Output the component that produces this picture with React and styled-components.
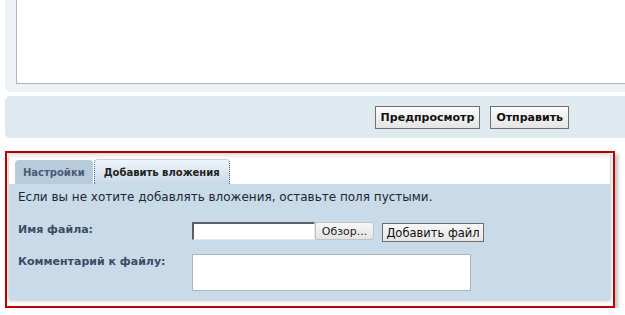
import React from 'react'
import styled, { createGlobalStyle } from 'styled-components'

const GlobalStyle = createGlobalStyle`
  html, body { margin: 0; padding: 0; background: #fff; overflow: hidden; }
  body { font-family: "DejaVu Sans", Verdana, sans-serif; }
`

const Page = styled.div`
  width: 640px;
  padding-left: 5px;
`

const EditorPanel = styled.div`
  background: #edf2f6;
  border-radius: 0 0 5px 5px;
  padding: 0 0 8px 11px;
`

const Editor = styled.textarea`
  display: block;
  box-sizing: border-box;
  width: 100%;
  height: 84px;
  margin: 0;
  border: 1px solid #b3b3b3;
  border-top: none;
  border-right: none;
  background: #fff;
  resize: none;
  outline: none;
`

const ActionBar = styled.div`
  margin-top: 4px;
  height: 42px;
  box-sizing: border-box;
  padding: 10px 76px 0 0;
  background: #dfe9f0;
  border-radius: 5px;
  display: flex;
  justify-content: flex-end;
  align-items: flex-start;
  gap: 10px;
`

const SubmitButton = styled.button`
  height: 23px;
  padding: 0 5px;
  border: 1px solid #6f6f6f;
  background: linear-gradient(#fbfbfb, #e4e4e4);
  font-family: "DejaVu Sans", Verdana, sans-serif;
  font-weight: bold;
  font-size: 11px;
  color: #111;
`

const Highlight = styled.div`
  margin-top: 13px;
  width: 610px;
  box-sizing: border-box;
  border: 2px solid #c00000;
  padding: 1px 3px 6px 2px;
  box-shadow: 3px 3px 4px rgba(0, 0, 0, 0.25);
`

const AttachBox = styled.div`
  background: #fff;
  box-shadow: 0 0 4px rgba(0, 0, 0, 0.35);
`

const Tabs = styled.div`
  display: flex;
  align-items: flex-end;
  padding: 5px 0 0 6px;
  background: linear-gradient(#e6e6e6, #fff 5px);
`

const Tab = styled.div`
  box-sizing: border-box;
  height: ${p => (p.$active ? 25 : 24)}px;
  padding: 0 ${p => (p.$active ? 9 : 7)}px;
  display: flex;
  align-items: center;
  font-size: 10px;
  font-weight: bold;
  color: ${p => (p.$active ? '#222' : '#4b5a78')};
  background: ${p => (p.$active ? 'linear-gradient(#eef5fc, #cad9e8)' : '#b8cbdb')};
  border-radius: 4px 4px 0 0;
  border-top: 1px solid ${p => (p.$active ? '#c7d2dc' : '#b8cbdb')};
  border-left: 1px ${p => (p.$active ? 'dotted #45699a' : 'solid #b8cbdb')};
  border-right: 1px ${p => (p.$active ? 'dotted #45699a' : 'solid #b8cbdb')};
  margin-left: ${p => (p.$active ? 1 : 0)}px;
`

const TabBody = styled.div`
  background: #c9dae9;
  padding: 6px 8px 9px 9px;
`

const Hint = styled.div`
  font-size: 12px;
  line-height: 15px;
  color: #1f2633;
  margin-bottom: 17px;
`

const Row = styled.div`
  display: grid;
  grid-template-columns: 174px 1fr;
  align-items: start;
  & + & { margin-top: 12px; }
`

const Label = styled.div`
  font-size: 11px;
  font-weight: bold;
  line-height: 14px;
  color: #3c4a64;
  padding-top: 1px;
`

const FileRow = styled.div`
  display: flex;
  align-items: flex-start;
`

const FileField = styled.input`
  box-sizing: border-box;
  width: 123px;
  height: 18px;
  margin: 0;
  background: #fff;
  border-style: solid;
  border-width: 2px 1px 1px 2px;
  border-color: #5b5f66 #e6e6e6 #e6e6e6 #5b5f66;
  outline: none;
`

const Browse = styled.button`
  box-sizing: border-box;
  height: 18px;
  width: 59px;
  margin: 0 8px 0 0;
  padding: 0;
  border: 1px solid #c2c2c2;
  border-radius: 3px;
  background: linear-gradient(#f7f7f7, #e3e3e3);
  font-family: "DejaVu Sans", Verdana, sans-serif;
  font-size: 11px;
  color: #222;
`

const AddFile = styled.button`
  box-sizing: border-box;
  height: 19px;
  width: 102px;
  padding: 0;
  margin: 1px 0 0;
  border: 1px solid #6d6d6d;
  background: linear-gradient(#f7f7f7, #e6e6e6);
  font-family: "DejaVu Sans", Verdana, sans-serif;
  font-size: 11.5px;
  color: #111;
`

const Comment = styled.textarea`
  box-sizing: border-box;
  width: 279px;
  height: 37px;
  margin: 0;
  border: 1px solid #adb6bf;
  background: #fff;
  resize: none;
  outline: none;
`

export default function App() {
  return (
    <>
      <GlobalStyle />
      <Page>
        <EditorPanel>
          <Editor readOnly />
        </EditorPanel>
        <ActionBar>
          <SubmitButton>Предпросмотр</SubmitButton>
          <SubmitButton>Отправить</SubmitButton>
        </ActionBar>
        <Highlight>
          <AttachBox>
            <Tabs>
              <Tab>Настройки</Tab>
              <Tab $active>Добавить вложения</Tab>
            </Tabs>
            <TabBody>
              <Hint>Если вы не хотите добавлять вложения, оставьте поля пустыми.</Hint>
              <Row>
                <Label>Имя файла:</Label>
                <FileRow>
                  <FileField type="text" readOnly />
                  <Browse>Обзор...</Browse>
                  <AddFile>Добавить файл</AddFile>
                </FileRow>
              </Row>
              <Row>
                <Label>Комментарий к файлу:</Label>
                <Comment readOnly />
              </Row>
            </TabBody>
          </AttachBox>
        </Highlight>
      </Page>
    </>
  )
}
